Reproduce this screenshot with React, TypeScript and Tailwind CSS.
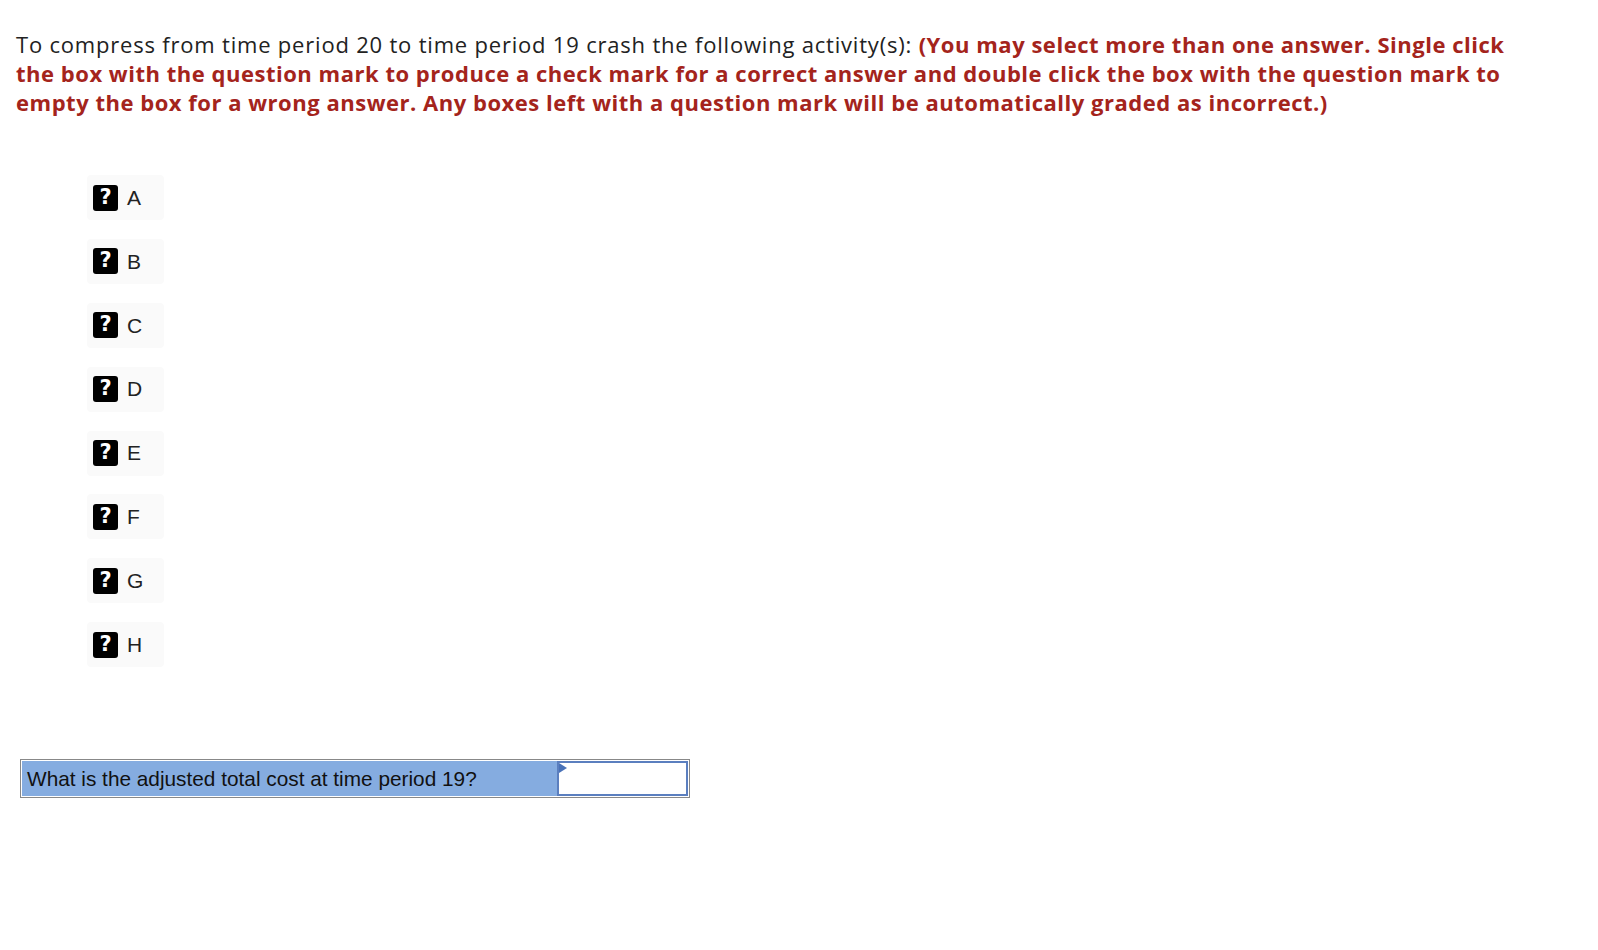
const options = ['A', 'B', 'C', 'D', 'E', 'F', 'G', 'H'];

function QuestionBox() {
  return (
    <span
      className="inline-flex h-[26px] w-[25px] items-center justify-center rounded-[3px] bg-black pb-px text-[21px] font-black leading-none text-white"
      style={{ fontFamily: '"DejaVu Sans", sans-serif' }}
    >
      ?
    </span>
  );
}

export default function App() {
  return (
    <div className="min-h-[950px] bg-white pt-[30px]" style={{ fontFamily: '"Open Sans", sans-serif' }}>
      <p className="whitespace-nowrap px-4 text-[22px] leading-[29px] tracking-[0.8px] text-[#222]">
        To compress from time period 20 to time period 19 crash the following activity(s):{' '}
        <span className="font-bold tracking-[0.52px] text-[#a4241c]">
          (You may select more than one answer. Single click
          <br />
          the box with the question mark to produce a check mark for a correct answer and double click the box with the
          question mark to
          <br />
          empty the box for a wrong answer. Any boxes left with a question mark will be automatically graded as
          incorrect.)
        </span>
      </p>

      <div className="mt-[58px] flex flex-col gap-[18.9px] pl-[87px]">
        {options.map(o => (
          <div key={o} className="flex h-[45px] w-[77px] items-center gap-[9px] rounded-[4px] bg-[#fafafa] pl-[6px]">
            <QuestionBox />
            <span className="text-[21px] text-[#222]" style={{ fontFamily: '"Liberation Sans", Arial, sans-serif' }}>
              {o}
            </span>
          </div>
        ))}
      </div>

      <div
        className="ml-[20px] mt-[92px] flex h-[39px] w-[670px] border border-[#888] p-px"
        style={{ fontFamily: '"Liberation Sans", Arial, sans-serif' }}
      >
        <div className="flex w-[535px] items-center bg-[#85ace0] pl-[5px] text-[20.8px] text-[#111]">
          What is the adjusted total cost at time period 19?
        </div>
        <div className="relative flex-1 border-2 border-[#5b7fbf] bg-white">
          <svg className="absolute left-0 top-0" width="8" height="10" viewBox="0 0 8 10">
            <path d="M0 0 L8 5 L0 10 Z" fill="#4a72b8" />
          </svg>
        </div>
      </div>
    </div>
  );
}
